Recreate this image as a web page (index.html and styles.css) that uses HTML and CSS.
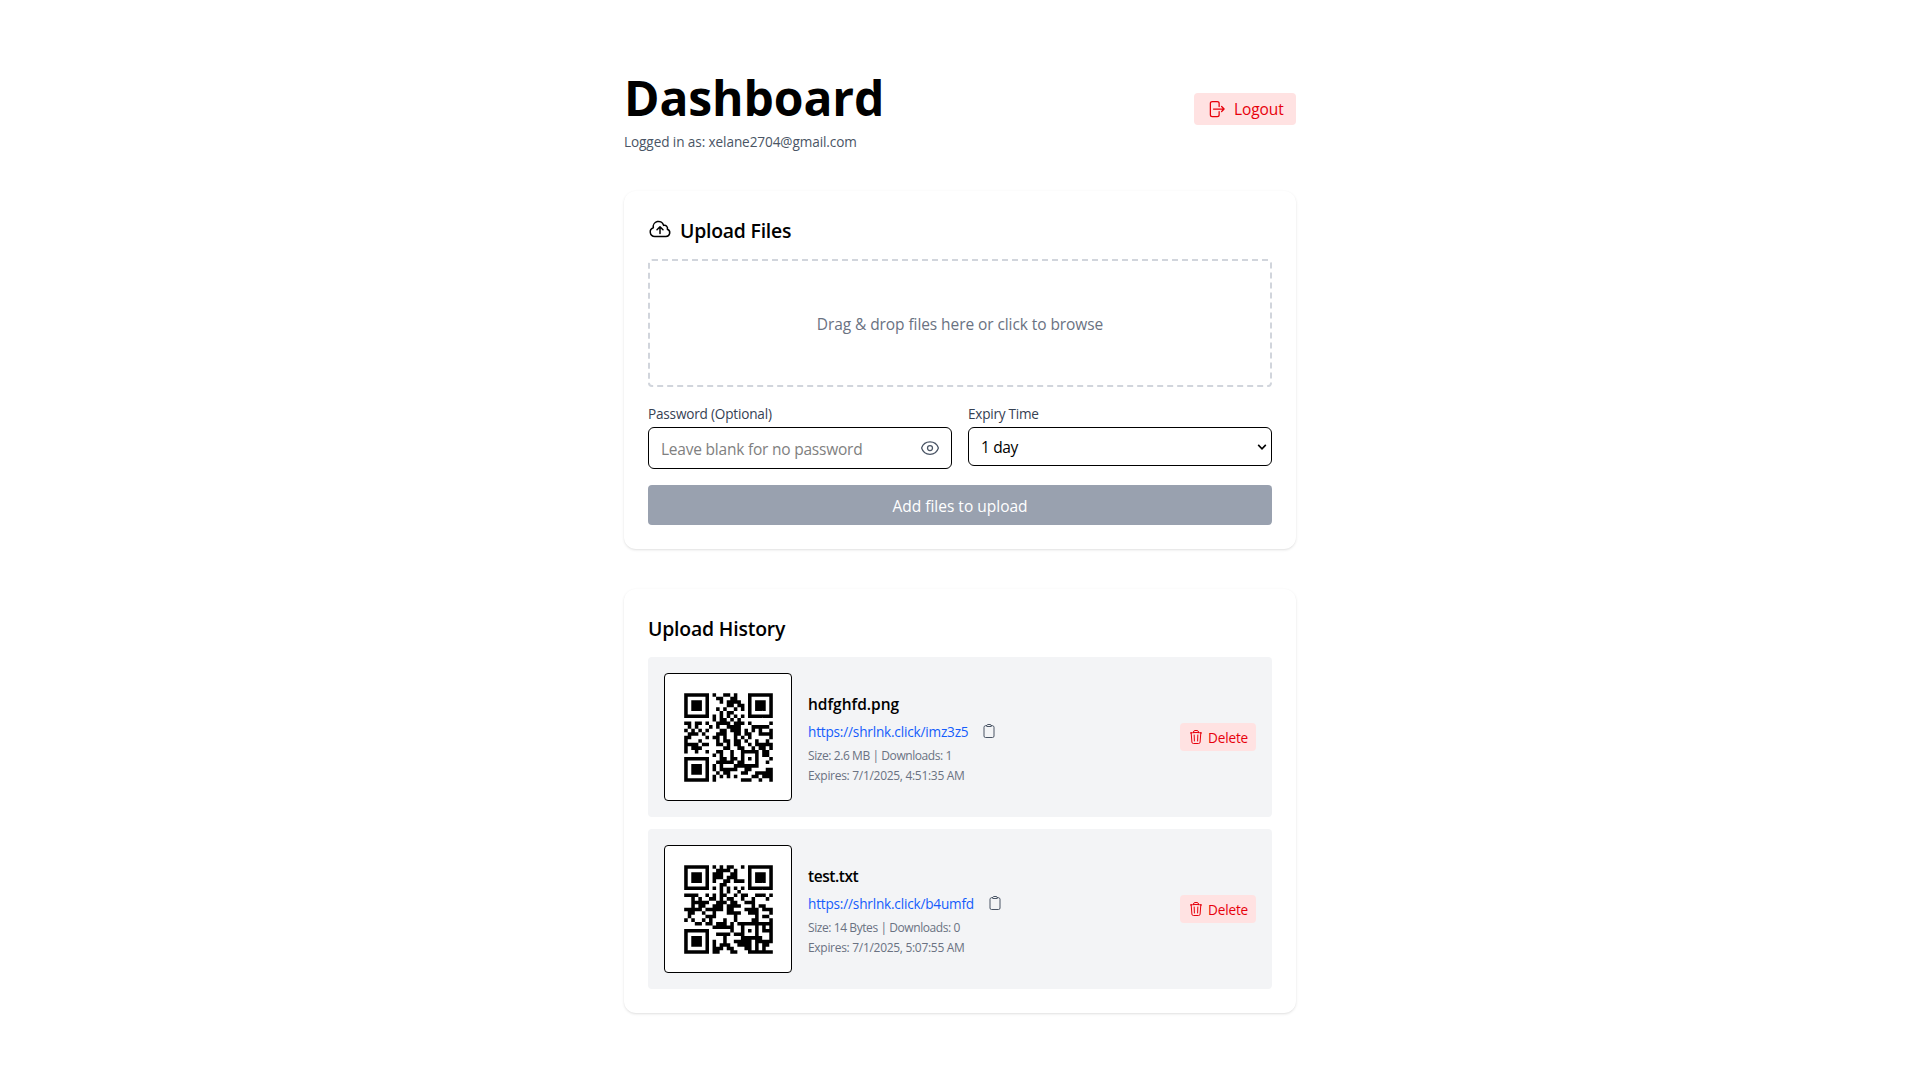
FILE: index.html
```
<!DOCTYPE html>
<html lang="en">
<head>
<meta charset="utf-8">
<title>Dashboard</title>
<link rel="stylesheet" href="styles.css">
</head>
<body>
<main class="page">
  <header class="header">
    <div>
      <h1 class="title">Dashboard</h1>
      <p class="account">Logged in as: xelane2704@gmail.com</p>
    </div>
    <button class="btn-danger logout" type="button">
      <svg class="icon-20" viewBox="0 0 24 24"><path d="M15.75 9V5.25A2.25 2.25 0 0 0 13.5 3h-6a2.25 2.25 0 0 0-2.25 2.25v13.5A2.25 2.25 0 0 0 7.5 21h6a2.25 2.25 0 0 0 2.25-2.25V15m3 0 3-3m0 0-3-3m3 3H9"/></svg>
      <span>Logout</span>
    </button>
  </header>

  <section class="card">
    <h2 class="card-title">
      <svg class="icon-24" viewBox="0 0 24 24"><path d="M12 16.5V9.75m0 0 3 3m-3-3-3 3M6.75 19.5a4.5 4.5 0 0 1-1.41-8.775 5.25 5.25 0 0 1 10.233-2.33 3 3 0 0 1 3.758 3.848A3.752 3.752 0 0 1 18 19.5H6.75Z"/></svg>
      <span>Upload Files</span>
    </h2>
    <div class="dropzone">Drag &amp; drop files here or click to browse</div>
    <div class="fields">
      <div class="field">
        <label class="label" for="password">Password (Optional)</label>
        <div class="control password">
          <input class="input" id="password" type="password" placeholder="Leave blank for no password">
          <svg class="icon-20" viewBox="0 0 24 24"><path d="M2.036 12.322a1.012 1.012 0 0 1 0-.639C3.423 7.51 7.36 4.5 12 4.5c4.638 0 8.573 3.007 9.963 7.178.07.207.07.431 0 .639C20.577 16.49 16.64 19.5 12 19.5c-4.638 0-8.573-3.007-9.963-7.178Z"/><path d="M15 12a3 3 0 1 1-6 0 3 3 0 0 1 6 0Z"/></svg>
        </div>
      </div>
      <div class="field">
        <label class="label expiry" for="expiry">Expiry Time</label>
        <div class="control">
          <select class="select" id="expiry"><option>1 day</option></select>
          <svg class="chevron" viewBox="0 0 10 6"><path d="M1.2 0.9 5 4.8 8.8 0.9"/></svg>
        </div>
      </div>
    </div>
    <button class="submit" type="button" disabled>Add files to upload</button>
  </section>

  <section class="card">
    <h2 class="card-title history-title"><span>Upload History</span></h2>
    <ul class="history">
      <li class="item">
        <div class="qr" data-url="https://shrlnk.click/imz3z5"></div>
        <div class="details">
          <h3 class="name">hdfghfd.png</h3>
          <div class="link-row">
            <a class="link">https://shrlnk.click/imz3z5</a>
            <svg class="icon-16" viewBox="0 0 24 24"><path d="M15.666 3.888A2.25 2.25 0 0 0 13.5 2.25h-3c-1.03 0-1.9.693-2.166 1.638m7.332 0c.055.194.084.4.084.612v0a.75.75 0 0 1-.75.75H9a.75.75 0 0 1-.75-.75v0c0-.212.03-.418.084-.612m7.332 0c.646.049 1.288.11 1.927.184 1.1.128 1.907 1.077 1.907 2.185V19.5a2.25 2.25 0 0 1-2.25 2.25H6.75A2.25 2.25 0 0 1 4.5 19.5V6.257c0-1.108.806-2.057 1.907-2.185a48.208 48.208 0 0 1 1.927-.184"/></svg>
          </div>
          <p class="meta">Size: 2.6 MB | Downloads: 1</p>
          <p class="meta expires">Expires: 7/1/2025, 4:51:35 AM</p>
        </div>
        <button class="btn-danger delete" type="button">
          <svg class="icon-16" viewBox="0 0 24 24"><path d="m14.74 9-.346 9m-4.788 0L9.26 9m9.968-3.21c.342.052.682.107 1.022.166m-1.022-.165L18.16 19.673a2.25 2.25 0 0 1-2.244 2.077H8.084a2.25 2.25 0 0 1-2.244-2.077L4.772 5.79m14.456 0a48.108 48.108 0 0 0-3.478-.397m-12 .562c.34-.059.68-.114 1.022-.165m0 0a48.11 48.11 0 0 1 3.478-.397m7.5 0v-.916c0-1.18-.91-2.164-2.09-2.201a51.964 51.964 0 0 0-3.32 0c-1.18.037-2.09 1.022-2.09 2.201v.916m7.5 0a48.667 48.667 0 0 0-7.5 0"/></svg>
          <span>Delete</span>
        </button>
      </li>
      <li class="item">
        <div class="qr" data-url="https://shrlnk.click/b4umfd"></div>
        <div class="details">
          <h3 class="name name-short">test.txt</h3>
          <div class="link-row">
            <a class="link">https://shrlnk.click/b4umfd</a>
            <svg class="icon-16" viewBox="0 0 24 24"><path d="M15.666 3.888A2.25 2.25 0 0 0 13.5 2.25h-3c-1.03 0-1.9.693-2.166 1.638m7.332 0c.055.194.084.4.084.612v0a.75.75 0 0 1-.75.75H9a.75.75 0 0 1-.75-.75v0c0-.212.03-.418.084-.612m7.332 0c.646.049 1.288.11 1.927.184 1.1.128 1.907 1.077 1.907 2.185V19.5a2.25 2.25 0 0 1-2.25 2.25H6.75A2.25 2.25 0 0 1 4.5 19.5V6.257c0-1.108.806-2.057 1.907-2.185a48.208 48.208 0 0 1 1.927-.184"/></svg>
          </div>
          <p class="meta">Size: 14 Bytes | Downloads: 0</p>
          <p class="meta expires">Expires: 7/1/2025, 5:07:55 AM</p>
        </div>
        <button class="btn-danger delete" type="button">
          <svg class="icon-16" viewBox="0 0 24 24"><path d="m14.74 9-.346 9m-4.788 0L9.26 9m9.968-3.21c.342.052.682.107 1.022.166m-1.022-.165L18.16 19.673a2.25 2.25 0 0 1-2.244 2.077H8.084a2.25 2.25 0 0 1-2.244-2.077L4.772 5.79m14.456 0a48.108 48.108 0 0 0-3.478-.397m-12 .562c.34-.059.68-.114 1.022-.165m0 0a48.11 48.11 0 0 1 3.478-.397m7.5 0v-.916c0-1.18-.91-2.164-2.09-2.201a51.964 51.964 0 0 0-3.32 0c-1.18.037-2.09 1.022-2.09 2.201v.916m7.5 0a48.667 48.667 0 0 0-7.5 0"/></svg>
          <span>Delete</span>
        </button>
      </li>
    </ul>
  </section>
</main>
<script src="qr.js"></script>
</body>
</html>
```
FILE: styles.css
```
*, *::before, *::after { box-sizing: border-box; }

body {
  margin: 0;
  background: #fff;
  color: #000;
  font: 400 15.5px/24px "Open Sans", "Noto Sans", sans-serif;
}

h1, h2, h3, p, ul { margin: 0; padding: 0; }
button, input, select { font: inherit; margin: 0; }
button { border: 0; }

svg {
  display: block;
  flex: none;
  fill: none;
  stroke: currentColor;
  stroke-width: 1.5;
  stroke-linecap: round;
  stroke-linejoin: round;
}
.icon-16 { width: 16px; height: 16px; }
.icon-20 { width: 20px; height: 20px; }
.icon-24 { width: 24px; height: 24px; }

.page {
  width: 672px;
  margin: 0 auto;
  padding: 67px 0 64px;
  display: flex;
  flex-direction: column;
  gap: 40px;
}

.header { display: flex; justify-content: space-between; align-items: center; height: 84px; }
.title { padding: 7px 0 0; font-size: 48px; line-height: 48px; font-weight: 700; letter-spacing: -0.1px; }
.account { margin-top: 10px; font-size: 13.6px; line-height: 20px; letter-spacing: -0.1px; color: #4a5565; }

.btn-danger {
  display: flex;
  align-items: center;
  flex: none;
  border-radius: 4px;
  background: #ffe2e2;
  color: #e7000b;
}
.logout { width: 102px; height: 32px; padding: 0 12px; gap: 8px; letter-spacing: -0.1px; }
.delete { width: 76px; height: 28px; padding: 0 8px; gap: 4px; font-size: 13.6px; letter-spacing: -0.17px; }
.delete span { padding-top: 1px; }

.card {
  padding: 24px;
  border-radius: 12px;
  background: #fff;
  box-shadow: 0 1px 3px rgba(0, 0, 0, 0.1), 0 1px 2px -1px rgba(0, 0, 0, 0.1);
}
.card-title {
  display: flex;
  align-items: center;
  gap: 8px;
  height: 28px;
  margin-bottom: 16px;
  font-size: 19.4px;
  line-height: 28px;
  font-weight: 600;
  letter-spacing: -0.22px;
}
.card-title span { padding-top: 4px; }
.history-title { letter-spacing: -0.18px; }

.dropzone {
  display: flex;
  align-items: center;
  justify-content: center;
  height: 128px;
  padding-top: 2px;
  border: 2px dashed #d1d5dc;
  border-radius: 4px;
  color: #6a7282;
  letter-spacing: -0.08px;
}

.fields { display: grid; grid-template-columns: 1fr 1fr; gap: 16px; margin: 16px 0; }
.label { display: block; height: 20px; margin-bottom: 4px; font-size: 13.6px; line-height: 22px; letter-spacing: -0.2px; color: #364153; }
.expiry { letter-spacing: -0.25px; }
.control { position: relative; }
.password { color: #4a5565; }
.password svg { position: absolute; right: 12px; top: 11px; }
.chevron { position: absolute; right: 5px; top: 17px; width: 10px; height: 6px; stroke-linecap: butt; stroke-linejoin: miter; stroke-width: 1.6; }
.input, .select { display: block; width: 100%; border: 1px solid #000; border-radius: 6px; background: #fff; color: #000; }
.input { height: 42px; padding: 2px 40px 0 12px; letter-spacing: -0.22px; }
.input::placeholder { color: #808080; opacity: 1; }
.select { appearance: none; height: 39px; padding: 0 12px; letter-spacing: -0.37px; }

.submit {
  display: block;
  width: 100%;
  height: 40px;
  padding: 1px 0 0;
  border-radius: 4px;
  background: #99a1af;
  color: #fff;
}

.history { display: flex; flex-direction: column; gap: 12px; list-style: none; }
.item { display: flex; align-items: center; gap: 16px; height: 160px; padding: 16px; border-radius: 4px; background: #f3f4f6; }
.qr { flex: none; width: 128px; height: 128px; padding: 4.5px; border: 1px solid #000; border-radius: 4px; background: #fff; }
.qr svg { width: 100%; height: 100%; fill: #000; stroke: none; }
.details { flex: 1; padding-top: 2px; }
.name { font-size: 15.5px; line-height: 24px; font-weight: 600; }
.name-short { letter-spacing: -0.45px; }
.link-row { display: flex; align-items: center; gap: 12.5px; margin: 6px 0; height: 20px; color: #4a5565; }
.link { font-size: 13.6px; line-height: 20px; letter-spacing: -0.19px; color: #155dfc; }
.link-row svg { margin-bottom: 2px; }
.meta { font-size: 12px; line-height: 16px; letter-spacing: -0.42px; color: #6a7282; }
.expires { margin-top: 4px; letter-spacing: -0.3px; }
```
FILE: qr.js
```
// Version 2-L QR code (25x25), byte mode.
function qrMatrix(text) {
  const N = 25, DATA = 34, EC = 10;
  const bits = [];
  const put = (v, n) => { for (let i = n - 1; i >= 0; i--) bits.push((v >> i) & 1); };
  put(4, 4); put(text.length, 8);
  for (const c of text) put(c.charCodeAt(0), 8);
  put(0, Math.min(4, DATA * 8 - bits.length));
  while (bits.length % 8) bits.push(0);
  const cw = [];
  for (let i = 0; i < bits.length; i += 8) cw.push(parseInt(bits.slice(i, i + 8).join(''), 2));
  for (let p = 0xec; cw.length < DATA; p ^= 0xec ^ 0x11) cw.push(p);
  const mul = (a, b) => { let r = 0; for (let i = 7; i >= 0; i--) { r = (r << 1) ^ ((r >> 7) * 0x11d); r ^= ((b >> i) & 1) * a; } return r; };
  const gen = Array(EC).fill(0); gen[EC - 1] = 1;
  for (let i = 0, root = 1; i < EC; i++, root = mul(root, 2))
    for (let j = 0; j < EC; j++) { gen[j] = mul(gen[j], root); if (j + 1 < EC) gen[j] ^= gen[j + 1]; }
  const rem = Array(EC).fill(0);
  for (const b of cw) { const f = b ^ rem.shift(); rem.push(0); gen.forEach((g, i) => rem[i] ^= mul(g, f)); }
  const all = cw.concat(rem);

  const m = Array.from({ length: N }, () => Array(N).fill(0));
  const fn = Array.from({ length: N }, () => Array(N).fill(false));
  const set = (x, y, v) => { if (x >= 0 && y >= 0 && x < N && y < N) { m[y][x] = v ? 1 : 0; fn[y][x] = true; } };
  for (let i = 0; i < N; i++) { set(6, i, i % 2 === 0); set(i, 6, i % 2 === 0); }
  for (const [cx, cy] of [[3, 3], [N - 4, 3], [3, N - 4]])
    for (let dy = -4; dy <= 4; dy++) for (let dx = -4; dx <= 4; dx++) { const d = Math.max(Math.abs(dx), Math.abs(dy)); set(cx + dx, cy + dy, d !== 2 && d !== 4); }
  for (let dy = -2; dy <= 2; dy++) for (let dx = -2; dx <= 2; dx++) set(18 + dx, 18 + dy, Math.max(Math.abs(dx), Math.abs(dy)) !== 1);
  const format = mask => {
    const d = (1 << 3) | mask; let r = d;
    for (let i = 0; i < 10; i++) r = (r << 1) ^ ((r >> 9) * 0x537);
    const b = ((d << 10) | r) ^ 0x5412, g = i => (b >> i) & 1;
    for (let i = 0; i <= 5; i++) set(8, i, g(i));
    set(8, 7, g(6)); set(8, 8, g(7)); set(7, 8, g(8));
    for (let i = 9; i < 15; i++) set(14 - i, 8, g(i));
    for (let i = 0; i < 8; i++) set(N - 1 - i, 8, g(i));
    for (let i = 8; i < 15; i++) set(8, N - 15 + i, g(i));
    set(8, N - 8, 1);
  };
  format(0);
  let k = 0;
  for (let right = N - 1; right >= 1; right -= 2) {
    if (right === 6) right = 5;
    for (let v = 0; v < N; v++) for (let j = 0; j < 2; j++) {
      const x = right - j, y = ((right + 1) & 2) === 0 ? N - 1 - v : v;
      if (!fn[y][x] && k < all.length * 8) { m[y][x] = (all[k >> 3] >> (7 - (k & 7))) & 1; k++; }
    }
  }
  const masks = [
    (x, y) => (x + y) % 2, (x, y) => y % 2, (x, y) => x % 3, (x, y) => (x + y) % 3,
    (x, y) => ((x / 3 | 0) + (y / 2 | 0)) % 2, (x, y) => x * y % 2 + x * y % 3,
    (x, y) => (x * y % 2 + x * y % 3) % 2, (x, y) => ((x + y) % 2 + x * y % 3) % 2
  ];
  const flip = i => { for (let y = 0; y < N; y++) for (let x = 0; x < N; x++) if (!fn[y][x] && masks[i](x, y) === 0) m[y][x] ^= 1; };
  const penalty = () => {
    let p = 0, dark = 0;
    const cols = m[0].map((_, x) => m.map(r => r[x]));
    for (const line of [...m, ...cols]) {
      const s = line.join('');
      for (const run of s.match(/0{5,}|1{5,}/g) || []) p += run.length - 2;
      for (let i = 0; i + 11 <= N; i++) {
        const w = s.substr(i, 11);
        if (w === '10111010000' || w === '00001011101') p += 40;
      }
    }
    for (let y = 0; y < N; y++) for (let x = 0; x < N; x++) {
      dark += m[y][x];
      if (x < N - 1 && y < N - 1 && m[y][x] === m[y][x + 1] && m[y][x] === m[y + 1][x] && m[y][x] === m[y + 1][x + 1]) p += 3;
    }
    return p + Math.floor(Math.abs(dark * 100 / (N * N) - 50) / 5) * 10;
  };
  let best = 0, low = Infinity;
  for (let i = 0; i < 8; i++) {
    format(i); flip(i);
    const p = penalty();
    if (p < low) { low = p; best = i; }
    flip(i);
  }
  format(best); flip(best);
  return m;
}

document.querySelectorAll('.qr').forEach(box => {
  let d = '';
  qrMatrix(box.dataset.url).forEach((row, y) => row.forEach((v, x) => { if (v) d += `M${x} ${y}h1v1h-1z`; }));
  box.innerHTML = `<svg viewBox="-4 -4 33 33"><path d="${d}"/></svg>`;
});
```
